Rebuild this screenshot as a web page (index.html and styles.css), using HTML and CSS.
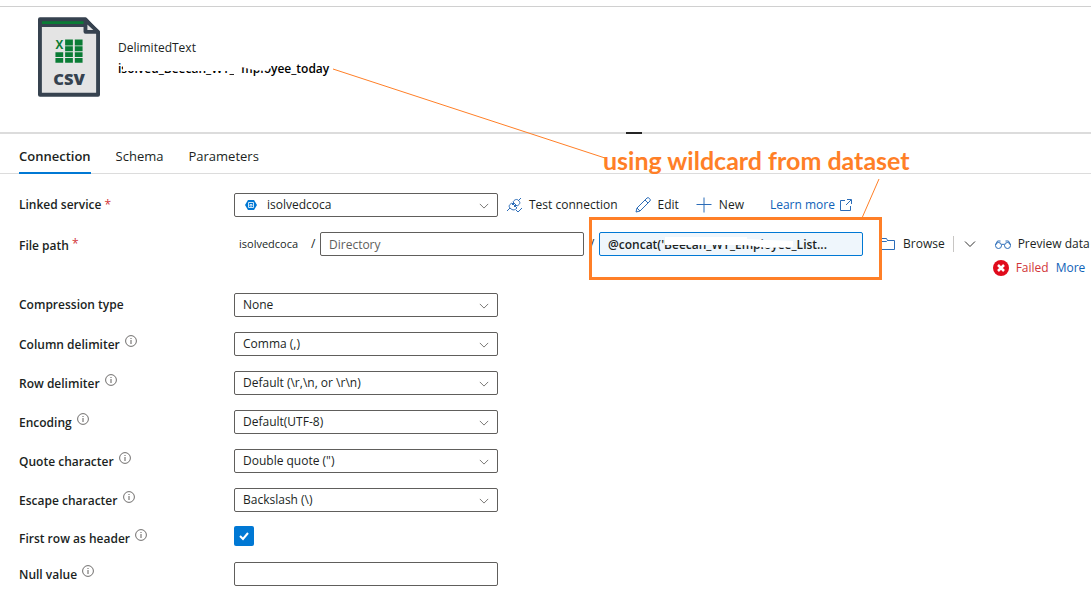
FILE: index.html
```html
<!DOCTYPE html>
<html lang="en">
<head>
<meta charset="UTF-8" />
<title>Dataset - DelimitedText</title>
<link rel="stylesheet" href="styles.css">
</head>
<body>

<svg class="defs" aria-hidden="true">
  <symbol id="info" viewBox="0 0 12 12">
    <circle cx="6" cy="6" r="5.4" fill="none" stroke="#605e5c" stroke-width=".9"/>
    <path d="M6 5v4M6 3v1" stroke="#605e5c"/>
  </symbol>
  <symbol id="chevron" viewBox="0 0 12 12">
    <path d="M1 3.5l5 5 5-5" fill="none" stroke="currentColor"/>
  </symbol>
</svg>

<header class="header">
  <svg class="csv" viewBox="0 0 64 82" aria-hidden="true">
    <path d="M2 2h47l13 14v64H2z" fill="#e4e4e4" stroke="#36424f" stroke-width="4" stroke-linejoin="round"/>
    <path d="M2 2h47v8H2z" fill="#36424f"/>
    <path d="M4 4h44v3H4z" fill="#0a7c35"/>
    <path d="M49 3v12h13z" fill="#e4e4e4" stroke="#36424f" stroke-width="4" stroke-linejoin="round"/>
    <path d="M28 23h8v6h-8zM38 23h8v6h-8zM28 30h8v5h-8zM38 30h8v5h-8zM18 36h8v5h-8zM28 36h8v5h-8zM38 36h8v5h-8zM18 42h8v5h-8zM28 42h8v5h-8zM38 42h8v5h-8z" fill="#0a7c35"/>
    <text x="18" y="33" class="csv-x">X</text>
    <text x="32" y="70" class="csv-text">CSV</text>
  </svg>
  <div class="title">
    <div class="type">DelimitedText</div>
    <div class="name">isolved_Beecan_WY_Employee_today
      <svg class="erase" viewBox="0 0 160 18" aria-hidden="true">
        <path d="M5 2H153V8L147 11L136 10L123 7V18H116V11H5z" fill="#fff"/>
      </svg>
    </div>
  </div>
  <span class="grip"></span>
</header>

<nav class="tabs">
  <a href="#connection" class="tab active">Connection</a>
  <a href="#schema" class="tab">Schema</a>
  <a href="#parameters" class="tab">Parameters</a>
</nav>

<form class="form" id="connection">
  <div class="row">
    <label for="linked">Linked service <span class="req">*</span></label>
    <div class="field">
      <div class="select with-icon">
        <svg class="service" viewBox="0 0 12 12" aria-hidden="true">
          <path d="M3 1h6l3 5-3 5H3L0 6z" fill="#0078d4"/>
          <path d="M3.500 3.500h5v5h-5zM5 5.500h2v1.500H5z" fill="none" stroke="#cfe6f8"/>
        </svg>
        <select id="linked"><option>isolvedcoca</option></select>
        <svg class="arrow"><use href="#chevron"/></svg>
      </div>
      <div class="actions">
        <button type="button">
          <svg viewBox="0 0 16 16" class="icon"><path d="M1 14l3-3M12 4l3-3M4 11c-2-2 0-4 2-5l5 5c-2 2-4 3-7 0zM7 5c1-2 4-4 6-1 2 2 0 4-2 5zM6 8l2-2M8 10l2-2M10 13l2 2 4-4"/></svg>
          Test connection</button>
        <button type="button">
          <svg viewBox="0 0 16 16" class="icon"><path d="M1 15l1-4L12 1q1-1 2.500.5T15 4L5 14zM2 11l3 3M10 3l3 3"/></svg>
          Edit</button>
        <button type="button">
          <svg viewBox="0 0 16 16" class="icon"><path d="M8 .5v15M.5 7.500h15"/></svg>
          New</button>
        <a href="#learn" class="learn">Learn more
          <svg viewBox="0 0 12 12" class="icon small"><path d="M5 1.500H.5v10h10V7M7 .5h4.500V5M11 1L6 6"/></svg></a>
      </div>
    </div>
  </div>

  <div class="row path-row">
    <label for="directory">File path <span class="req high">*</span></label>
    <div class="field">
      <span class="container">isolvedcoca</span>
      <span class="slash">/</span>
      <input type="text" id="directory" placeholder="Directory">
      <span class="slash second">/</span>
      <div class="file">
        <input type="text" id="file" aria-label="File name" value="@concat('Beecan_WY_Employee_List...">
        <svg class="erase" viewBox="0 0 140 18" aria-hidden="true">
          <path d="M2 2H84V4L130 6V12L104 13L82 10H2z" fill="#fff"/>
        </svg>
      </div>
      <div class="actions browse">
        <button type="button">
          <svg viewBox="0 0 16 16" class="icon"><path d="M.5 3.500v-1h6l1 2h7v9H.5zM.5 5.500h6l1-1"/></svg>
          Browse</button>
        <button type="button" class="more" aria-label="More browse options"><svg class="icon small"><use href="#chevron"/></svg></button>
      </div>
      <div class="preview">
        <button type="button">
          <svg viewBox="0 0 16 16" class="icon"><circle cx="3.500" cy="9.500" r="3"/><circle cx="12.500" cy="9.500" r="3"/><path d="M6.500 9q1.500-2 3 0M.5 9l2-4h3M15.500 9l-2-4h-3"/></svg>
          Preview data</button>
        <div class="status">
          <svg viewBox="0 0 16 16" aria-hidden="true"><circle cx="8" cy="8" r="8" fill="#e00b1c"/><path d="M5 5l6 6M11 5l-6 6" stroke="#fff" stroke-width="2.500"/></svg>
          <span class="failed">Failed</span>
          <a href="#more">More</a>
        </div>
      </div>
    </div>
  </div>

  <div class="row">
    <label for="compression">Compression type</label>
    <div class="select"><select id="compression"><option>None</option></select><svg class="arrow"><use href="#chevron"/></svg></div>
  </div>
  <div class="row">
    <label for="column">Column delimiter <svg class="info"><use href="#info"/></svg></label>
    <div class="select"><select id="column"><option>Comma (,)</option></select><svg class="arrow"><use href="#chevron"/></svg></div>
  </div>
  <div class="row">
    <label for="rowdel">Row delimiter <svg class="info"><use href="#info"/></svg></label>
    <div class="select"><select id="rowdel"><option>Default (\r,\n, or \r\n)</option></select><svg class="arrow"><use href="#chevron"/></svg></div>
  </div>
  <div class="row">
    <label for="encoding">Encoding <svg class="info"><use href="#info"/></svg></label>
    <div class="select"><select id="encoding"><option>Default(UTF-8)</option></select><svg class="arrow"><use href="#chevron"/></svg></div>
  </div>
  <div class="row">
    <label for="quote">Quote character <svg class="info"><use href="#info"/></svg></label>
    <div class="select"><select id="quote"><option>Double quote (")</option></select><svg class="arrow"><use href="#chevron"/></svg></div>
  </div>
  <div class="row">
    <label for="escape">Escape character <svg class="info"><use href="#info"/></svg></label>
    <div class="select"><select id="escape"><option>Backslash (\)</option></select><svg class="arrow"><use href="#chevron"/></svg></div>
  </div>
  <div class="row check-row">
    <label for="header">First row as header <svg class="info"><use href="#info"/></svg></label>
    <div class="check">
      <input type="checkbox" id="header" checked>
      <svg viewBox="0 0 20 20" aria-hidden="true"><path d="M6 10l3 3 5-6" fill="none" stroke="#fff" stroke-width="2"/></svg>
    </div>
  </div>
  <div class="row">
    <label for="nullvalue">Null value <svg class="info"><use href="#info"/></svg></label>
    <input type="text" id="nullvalue">
  </div>
</form>

<!-- notes drawn over the form -->
<svg class="note-lines" width="1091" height="594" aria-hidden="true">
  <path d="M333 69L605 158M879 179L862 218" fill="none" stroke="#ff7f27"/>
</svg>
<div class="note-box"></div>
<div class="note-text">using wildcard from dataset</div>

</body>
</html>
```

FILE: styles.css
```css
* { box-sizing: border-box; }
body { margin: 0; padding-top: 6px; position: relative; overflow: hidden; background: #fff; color: #201f1e; font: 13px/18px "Open Sans", "Noto Sans", sans-serif; }
a { color: #0f62b8; text-decoration: none; }
button { display: flex; align-items: center; gap: 7px; padding: 0; border: 0; background: none; color: inherit; font: inherit; font-size: 12px; white-space: nowrap; }
.defs { position: absolute; width: 0; height: 0; }

.header { position: relative; display: flex; gap: 18px; height: 128px; padding: 10px 38px; border-top: 1px solid #d0d0d0; border-bottom: 2px solid #dcdcdc; }
.csv { width: 62px; height: 80px; }
.csv-x { fill: #0a7c35; font: bold 12px "Open Sans", sans-serif; }
.csv-text { fill: #36424f; font: 800 17px "Open Sans", sans-serif; text-anchor: middle; }
.title { padding-top: 22px; font-size: 12px; }
.name { position: relative; margin-top: 3px; color: #000; font-weight: 600; white-space: nowrap; }
.name .erase { position: absolute; left: 0; top: 0; width: 160px; height: 18px; }
.grip { position: absolute; left: 626px; bottom: -2px; width: 16px; height: 2px; background: #252525; }

.tabs { display: flex; gap: 25px; height: 40px; padding: 0 19px; border-bottom: 1px solid #dcdcdc; }
.tab { padding-top: 13px; color: #201f1e; }
.tab.active { margin-bottom: -1px; border-bottom: 2px solid #0078d4; font-weight: 600; }

.form { display: flex; flex-direction: column; gap: 15px; padding: 19px 0 8px 19px; }
.row { display: grid; grid-template-columns: 215px 1fr; height: 24px; }
.path-row { height: 46px; }
.check-row { height: 20px; margin: -1px 0 1px; }
label { padding-top: 3px; font-size: 12px; font-weight: 600; white-space: nowrap; }
.req { color: #d13438; font-weight: 400; }
.high { vertical-align: 2px; }
.info { width: 12px; height: 12px; margin-left: 2px; vertical-align: 2px; }
.field { display: flex; align-items: flex-start; }

.select { position: relative; flex: none; width: 264px; }
select, input[type=text] { flex: none; width: 264px; height: 24px; margin: 0; padding: 0 8px; border: 1px solid #605e5c; border-radius: 2px; background: #fff; color: #201f1e; font: inherit; font-size: 12px; appearance: none; }
.with-icon select { padding-left: 32px; }
.service { position: absolute; left: 11px; top: 6px; width: 12px; height: 12px; }
.arrow { position: absolute; right: 9px; top: 8px; width: 10px; height: 10px; color: #605e5c; pointer-events: none; }
input::placeholder { color: #605e5c; opacity: 1; }

.actions { display: flex; align-items: center; height: 24px; padding-left: 8px; gap: 17px; }
.icon { flex: none; width: 16px; height: 16px; fill: none; stroke: #2b6cb8; }
.icon.small { width: 12px; height: 12px; }
.learn { display: flex; align-items: center; gap: 5px; padding-left: 9px; font-size: 12px; }

.container { width: 77px; padding: 3px 0 0 5px; font-size: 11px; }
.slash { width: 9px; padding-top: 3px; font-size: 12px; }
.slash.second { width: 15px; padding-left: 6px; }
.file { position: relative; }
.file input[type=text] { border-color: #0078d4; background: #eff6fc; font-weight: 600; }
.file .erase { position: absolute; left: 64px; top: 3px; width: 140px; height: 18px; }
.browse { padding-left: 17px; gap: 8px; }
.more { padding-left: 10px; height: 16px; border-left: 1px solid #c8c6c4; color: #323130; }
.more .icon { stroke: none; }
.preview { margin-left: 19px; }
.preview button { height: 24px; }
.status { display: flex; align-items: center; gap: 7px; margin: 3px 0 0 -2px; font-size: 12px; }
.status svg { width: 16px; height: 16px; }
.failed { color: #d13438; }

.check { position: relative; width: 20px; height: 20px; }
.check input { display: block; width: 20px; height: 20px; margin: 0; border-radius: 2px; background: #0078d4; appearance: none; }
.check svg { position: absolute; left: 0; top: 0; width: 20px; height: 20px; pointer-events: none; }

.note-lines { position: absolute; left: 0; top: 0; pointer-events: none; }
.note-box { position: absolute; left: 589px; top: 217px; width: 293px; height: 63px; border: 3px solid #ff7f27; pointer-events: none; }
.note-text { position: absolute; left: 603px; top: 145px; color: #ff7f27; font: bold 25px/30px Lato, sans-serif; white-space: nowrap; }
```
